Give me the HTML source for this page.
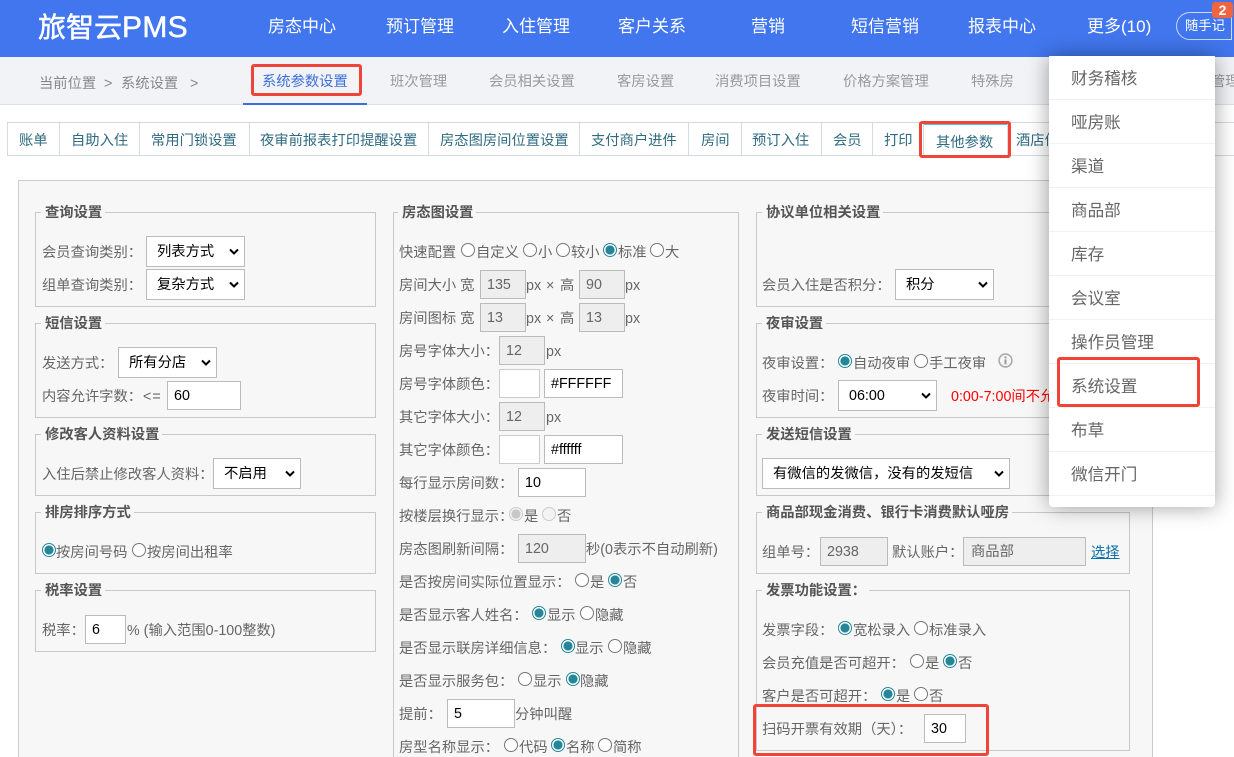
<!DOCTYPE html>
<html lang="zh"><head><meta charset="utf-8"><title>系统参数设置</title>
<style>
html,body{margin:0;padding:0;background:#fff}
#p{position:relative;width:1234px;height:757px;overflow:hidden;background:#fff;font-family:"Liberation Sans","Noto Sans CJK SC",sans-serif;font-feature-settings:"chws" 0,"halt" 0,"palt" 0}
#p div,#p span,#p i,#p a{position:absolute;box-sizing:border-box;white-space:nowrap}
.t{font-size:14.3px;line-height:22px;color:#666}
.n{font-size:17px;line-height:24px;color:#fff;top:15px}
.s{font-size:14.3px;line-height:22px;color:#999;top:71px}
.b{font-size:14.3px;line-height:22px;color:#888;top:73px}
.k{font-size:14.3px;line-height:22px;color:#2f6b82;top:130px}
.v{width:1px;top:122px;height:34px;background:#d3dbdf}
.f{border:1px solid #c8c8c8}
.l{font-size:14.3px;font-weight:bold;line-height:20px;color:#555;background:#f7f7f7;padding:0 3px 0 4px;top:203px}
.i{background:#fff;border:1px solid #bbb;height:29px;font-size:14.3px;line-height:29px;color:#000;padding-left:6px}
.d{background:#eee;color:#666}
.e{background:#fff;border:1px solid #bbb;height:31px;font-size:14.3px;line-height:31px;color:#000;padding-left:10px}
.e svg{position:absolute;right:5px;top:11px}
.r{width:14px;height:14px;border:1.4px solid #777;border-radius:50%;background:#fff}
.c{border-color:#268699;background:radial-gradient(circle,#268699 0,#268699 4.2px,#fff 4.9px)}
.g{border-color:#ccc;background:#f3f3f3}
.gc{border-color:#ccc;background:radial-gradient(circle,#c8c8c8 0,#c8c8c8 4.2px,#f3f3f3 4.9px)}
.m{left:0;width:166px;height:44px;border-bottom:1px solid #f1f1f1;font-size:16.6px;line-height:46px;color:#666;padding-left:22px}
.x{border:3px solid #ef4437;border-radius:3px;z-index:30}
</style></head><body><div id="p">

<div style="left:0;top:0;width:1234px;height:57px;background:#4176ee"></div>
<div style="left:38px;top:8px;font-size:28px;line-height:40px;color:#fff;-webkit-text-stroke:.5px #fff">旅智云<span style="position:static;font-size:30px;letter-spacing:.3px">PMS</span></div>
<span class="n" style="left:268px">房态中心</span>
<span class="n" style="left:386px">预订管理</span>
<span class="n" style="left:502px">入住管理</span>
<span class="n" style="left:618px">客户关系</span>
<span class="n" style="left:751px">营销</span>
<span class="n" style="left:851px">短信营销</span>
<span class="n" style="left:968px">报表中心</span>
<span class="n" style="left:1087px">更多(10)</span>
<div style="left:1176px;top:12px;width:56px;height:28px;border:1px solid #c9d8f8;border-radius:14px 0 0 14px"></div>
<span style="left:1185px;top:17px;font-size:13.3px;line-height:18px;color:#fff">随手记</span>
<div style="left:1212px;top:2px;width:21px;height:16px;background:#f0643f;border-radius:3px;color:#fff;font-size:14px;font-weight:bold;line-height:16px;text-align:center">2</div>

<div style="left:0;top:57px;width:1234px;height:48px;background:#f2f3f7;border-bottom:1px solid #e0e0e0"></div>
<span class="b" style="left:39px">当前位置</span><span class="b" style="left:104px">&gt;</span><span class="b" style="left:121px">系统设置</span><span class="b" style="left:190px">&gt;</span>
<span class="s" style="left:262px;color:#3a6fd8">系统参数设置</span>
<span class="s" style="left:390px">班次管理</span>
<span class="s" style="left:489px">会员相关设置</span>
<span class="s" style="left:617px">客房设置</span>
<span class="s" style="left:715px">消费项目设置</span>
<span class="s" style="left:843px">价格方案管理</span>
<span class="s" style="left:971px">特殊房</span>
<span class="s" style="left:1211px">管理</span>
<div style="left:243px;top:103px;width:124px;height:2px;background:#3a6fd8"></div>
<div class="x" style="left:251px;top:64px;width:111px;height:32px"></div>

<div style="left:7px;top:122px;width:1227px;height:1px;background:#d3dbdf"></div>
<div style="left:7px;top:155px;width:1227px;height:1px;background:#d3dbdf"></div>
<i class="v" style="left:7px"></i><i class="v" style="left:59px"></i><i class="v" style="left:139px"></i><i class="v" style="left:249px"></i><i class="v" style="left:428px"></i><i class="v" style="left:579px"></i><i class="v" style="left:688px"></i><i class="v" style="left:741px"></i><i class="v" style="left:821px"></i><i class="v" style="left:872px"></i>
<span class="k" style="left:19px">账单</span>
<span class="k" style="left:71px">自助入住</span>
<span class="k" style="left:151px">常用门锁设置</span>
<span class="k" style="left:260px">夜审前报表打印提醒设置</span>
<span class="k" style="left:440px">房态图房间位置设置</span>
<span class="k" style="left:591px">支付商户进件</span>
<span class="k" style="left:701px">房间</span>
<span class="k" style="left:752px">预订入住</span>
<span class="k" style="left:833px">会员</span>
<span class="k" style="left:884px">打印</span>
<div style="left:923px;top:122px;width:85px;height:35px;background:#fff;border-top:3px solid #5cbcf0;border-right:1px solid #d3dbdf;border-left:1px solid #d3dbdf"></div>
<span class="k" style="left:936px;top:132px">其他参数</span>
<span class="k" style="left:1016px">酒店信息</span>
<div class="x" style="left:919px;top:121px;width:92px;height:37px"></div>

<div style="left:18px;top:180px;width:1135px;height:590px;background:#f7f7f7;border:1px solid #ccc"></div>

<!-- left column -->
<div class="f" style="left:35px;top:212px;width:341px;height:95px"></div><div class="l" style="left:41px">查询设置</div>
<span class="t" style="left:42px;top:242px">会员查询类别：</span>
<div class="e" style="left:146px;top:236px;width:99px">列表方式<svg width="10" height="8" viewBox="0 0 10 8"><path d="M1 1.5L5 5.5L9 1.5" fill="none" stroke="#000" stroke-width="2"/></svg></div>
<span class="t" style="left:42px;top:275px">组单查询类别：</span>
<div class="e" style="left:146px;top:269px;width:99px">复杂方式<svg width="10" height="8" viewBox="0 0 10 8"><path d="M1 1.5L5 5.5L9 1.5" fill="none" stroke="#000" stroke-width="2"/></svg></div>

<div class="f" style="left:35px;top:323px;width:341px;height:95px"></div><div class="l" style="left:41px;top:314px">短信设置</div>
<span class="t" style="left:42px;top:353px">发送方式：</span>
<div class="e" style="left:118px;top:347px;width:99px">所有分店<svg width="10" height="8" viewBox="0 0 10 8"><path d="M1 1.5L5 5.5L9 1.5" fill="none" stroke="#000" stroke-width="2"/></svg></div>
<span class="t" style="left:42px;top:386px">内容允许字数：</span><span class="t" style="left:143px;top:386px;letter-spacing:1px">&lt;=</span>
<div class="i" style="left:167px;top:381px;width:74px">60</div>

<div class="f" style="left:35px;top:434px;width:341px;height:62px"></div><div class="l" style="left:41px;top:425px">修改客人资料设置</div>
<span class="t" style="left:42px;top:464px">入住后禁止修改客人资料：</span>
<div class="e" style="left:213px;top:458px;width:88px">不启用<svg width="10" height="8" viewBox="0 0 10 8"><path d="M1 1.5L5 5.5L9 1.5" fill="none" stroke="#000" stroke-width="2"/></svg></div>

<div class="f" style="left:35px;top:512px;width:341px;height:62px"></div><div class="l" style="left:41px;top:503px">排房排序方式</div>
<i class="r c" style="left:42px;top:543px"></i><span class="t" style="left:56px;top:542px">按房间号码</span>
<i class="r" style="left:132px;top:543px"></i><span class="t" style="left:147px;top:542px">按房间出租率</span>

<div class="f" style="left:35px;top:590px;width:341px;height:62px"></div><div class="l" style="left:41px;top:581px">税率设置</div>
<span class="t" style="left:42px;top:620px">税率：</span>
<div class="i" style="left:85px;top:615px;width:41px">6</div>
<span class="t" style="left:127px;top:620px">% (输入范围0-100整数)</span>

<!-- middle column -->
<div class="f" style="left:393px;top:212px;width:346px;height:560px"></div><div class="l" style="left:398px">房态图设置</div>
<span class="t" style="left:399px;top:242px">快速配置</span>
<i class="r" style="left:461px;top:243px"></i><span class="t" style="left:476px;top:242px">自定义</span>
<i class="r" style="left:523px;top:243px"></i><span class="t" style="left:538px;top:242px">小</span>
<i class="r" style="left:556px;top:243px"></i><span class="t" style="left:571px;top:242px">较小</span>
<i class="r c" style="left:603px;top:243px"></i><span class="t" style="left:618px;top:242px">标准</span>
<i class="r" style="left:650px;top:243px"></i><span class="t" style="left:665px;top:242px">大</span>

<span class="t" style="left:399px;top:275px">房间大小 宽</span>
<div class="i d" style="left:480px;top:270px;width:46px">135</div>
<span class="t" style="left:526px;top:275px">px</span><span class="t" style="left:546px;top:275px">×</span><span class="t" style="left:560px;top:275px">高</span>
<div class="i d" style="left:579px;top:270px;width:46px">90</div>
<span class="t" style="left:625px;top:275px">px</span>

<span class="t" style="left:399px;top:308px">房间图标 宽</span>
<div class="i d" style="left:480px;top:303px;width:46px">13</div>
<span class="t" style="left:526px;top:308px">px</span><span class="t" style="left:546px;top:308px">×</span><span class="t" style="left:560px;top:308px">高</span>
<div class="i d" style="left:579px;top:303px;width:46px">13</div>
<span class="t" style="left:625px;top:308px">px</span>

<span class="t" style="left:399px;top:341px">房号字体大小：</span>
<div class="i d" style="left:499px;top:336px;width:46px">12</div>
<span class="t" style="left:546px;top:341px">px</span>

<span class="t" style="left:399px;top:374px">房号字体颜色：</span>
<div class="i" style="left:499px;top:369px;width:41px;border-color:#ccc"></div>
<div class="i" style="left:544px;top:369px;width:79px">#FFFFFF</div>

<span class="t" style="left:399px;top:407px">其它字体大小：</span>
<div class="i d" style="left:499px;top:402px;width:46px">12</div>
<span class="t" style="left:546px;top:407px">px</span>

<span class="t" style="left:399px;top:440px">其它字体颜色：</span>
<div class="i" style="left:499px;top:435px;width:41px;border-color:#ccc"></div>
<div class="i" style="left:544px;top:435px;width:79px">#ffffff</div>

<span class="t" style="left:399px;top:473px">每行显示房间数：</span>
<div class="i" style="left:518px;top:468px;width:68px">10</div>

<span class="t" style="left:399px;top:506px">按楼层换行显示：</span>
<i class="r gc" style="left:509px;top:507px"></i><span class="t" style="left:524px;top:506px">是</span>
<i class="r g" style="left:542px;top:507px"></i><span class="t" style="left:557px;top:506px">否</span>

<span class="t" style="left:399px;top:539px">房态图刷新间隔：</span>
<div class="i d" style="left:518px;top:534px;width:68px">120</div>
<span class="t" style="left:586px;top:539px">秒(0表示不自动刷新)</span>

<span class="t" style="left:399px;top:572px">是否按房间实际位置显示：</span>
<i class="r" style="left:575px;top:573px"></i><span class="t" style="left:590px;top:572px">是</span>
<i class="r c" style="left:608px;top:573px"></i><span class="t" style="left:623px;top:572px">否</span>

<span class="t" style="left:399px;top:605px">是否显示客人姓名：</span>
<i class="r c" style="left:532px;top:606px"></i><span class="t" style="left:547px;top:605px">显示</span>
<i class="r" style="left:580px;top:606px"></i><span class="t" style="left:595px;top:605px">隐藏</span>

<span class="t" style="left:399px;top:638px">是否显示联房详细信息：</span>
<i class="r c" style="left:561px;top:639px"></i><span class="t" style="left:575px;top:638px">显示</span>
<i class="r" style="left:608px;top:639px"></i><span class="t" style="left:623px;top:638px">隐藏</span>

<span class="t" style="left:399px;top:671px">是否显示服务包：</span>
<i class="r" style="left:518px;top:672px"></i><span class="t" style="left:533px;top:671px">显示</span>
<i class="r c" style="left:566px;top:672px"></i><span class="t" style="left:580px;top:671px">隐藏</span>

<span class="t" style="left:399px;top:704px">提前：</span>
<div class="i" style="left:447px;top:699px;width:68px">5</div>
<span class="t" style="left:515px;top:704px">分钟叫醒</span>

<span class="t" style="left:399px;top:737px">房型名称显示：</span>
<i class="r" style="left:504px;top:738px"></i><span class="t" style="left:519px;top:737px">代码</span>
<i class="r c" style="left:551px;top:738px"></i><span class="t" style="left:566px;top:737px">名称</span>
<i class="r" style="left:598px;top:738px"></i><span class="t" style="left:613px;top:737px">简称</span>

<!-- right column -->
<div class="f" style="left:756px;top:212px;width:374px;height:95px"></div><div class="l" style="left:762px">协议单位相关设置</div>
<span class="t" style="left:762px;top:275px">会员入住是否积分：</span>
<div class="e" style="left:895px;top:269px;width:99px">积分<svg width="10" height="8" viewBox="0 0 10 8"><path d="M1 1.5L5 5.5L9 1.5" fill="none" stroke="#000" stroke-width="2"/></svg></div>

<div class="f" style="left:756px;top:323px;width:374px;height:95px"></div><div class="l" style="left:762px;top:314px">夜审设置</div>
<span class="t" style="left:762px;top:353px">夜审设置：</span>
<i class="r c" style="left:838px;top:354px"></i><span class="t" style="left:853px;top:353px">自动夜审</span>
<i class="r" style="left:914px;top:354px"></i><span class="t" style="left:929px;top:353px">手工夜审</span>
<svg style="position:absolute;left:998px;top:353px" width="15" height="15" viewBox="0 0 15 15"><circle cx="7.5" cy="7.5" r="6.4" fill="none" stroke="#aaa" stroke-width="1.6"/><rect x="6.5" y="6.4" width="2" height="5" fill="#999"/><rect x="6.5" y="3.4" width="2" height="2" fill="#999"/></svg>
<span class="t" style="left:762px;top:386px">夜审时间：</span>
<div class="e" style="left:838px;top:380px;width:99px">06:00<svg width="10" height="8" viewBox="0 0 10 8"><path d="M1 1.5L5 5.5L9 1.5" fill="none" stroke="#000" stroke-width="2"/></svg></div>
<span class="t" style="left:951px;top:386px;color:#f00">0:00-7:00间不允许夜审</span>

<div class="f" style="left:756px;top:434px;width:374px;height:62px"></div><div class="l" style="left:762px;top:425px">发送短信设置</div>
<div class="e" style="left:762px;top:458px;width:248px">有微信的发微信，没有的发短信<svg width="10" height="8" viewBox="0 0 10 8"><path d="M1 1.5L5 5.5L9 1.5" fill="none" stroke="#000" stroke-width="2"/></svg></div>

<div class="f" style="left:756px;top:512px;width:374px;height:62px"></div><div class="l" style="left:762px;top:503px">商品部现金消费、银行卡消费默认哑房</div>
<span class="t" style="left:762px;top:542px">组单号：</span>
<div class="i d" style="left:820px;top:537px;width:68px">2938</div>
<span class="t" style="left:892px;top:542px">默认账户：</span>
<div class="i d" style="left:963px;top:537px;width:123px;padding-left:7px">商品部</div>
<a style="left:1091px;top:542px;font-size:14.3px;line-height:22px;color:#0b6ea8;text-decoration:underline">选择</a>

<div class="f" style="left:756px;top:590px;width:374px;height:161px"></div><div class="l" style="left:762px;top:581px">发票功能设置：</div>
<span class="t" style="left:762px;top:620px">发票字段：</span>
<i class="r c" style="left:838px;top:621px"></i><span class="t" style="left:853px;top:620px">宽松录入</span>
<i class="r" style="left:914px;top:621px"></i><span class="t" style="left:929px;top:620px">标准录入</span>
<span class="t" style="left:762px;top:653px">会员充值是否可超开：</span>
<i class="r" style="left:910px;top:654px"></i><span class="t" style="left:925px;top:653px">是</span>
<i class="r c" style="left:943px;top:654px"></i><span class="t" style="left:958px;top:653px">否</span>
<span class="t" style="left:762px;top:686px">客户是否可超开：</span>
<i class="r c" style="left:881px;top:687px"></i><span class="t" style="left:896px;top:686px">是</span>
<i class="r" style="left:914px;top:687px"></i><span class="t" style="left:929px;top:686px">否</span>
<span class="t" style="left:762px;top:719px">扫码开票有效期（天）：</span>
<div class="i" style="left:924px;top:714px;width:42px">30</div>
<div class="x" style="left:753px;top:704px;width:236px;height:52px"></div>

<!-- popup -->
<div style="left:1049px;top:56px;width:166px;height:451px;background:#fff;border-radius:0 0 4px 4px;box-shadow:0 0 22px rgba(0,0,0,.38);z-index:20">
<div class="m" style="top:0">财务稽核</div>
<div class="m" style="top:44px">哑房账</div>
<div class="m" style="top:88px">渠道</div>
<div class="m" style="top:132px">商品部</div>
<div class="m" style="top:176px">库存</div>
<div class="m" style="top:220px">会议室</div>
<div class="m" style="top:264px">操作员管理</div>
<div class="m" style="top:308px">系统设置</div>
<div class="m" style="top:352px">布草</div>
<div class="m" style="top:396px">微信开门</div>
</div>
<div class="x" style="left:1057px;top:357px;width:143px;height:50px"></div>
</div></body></html>
